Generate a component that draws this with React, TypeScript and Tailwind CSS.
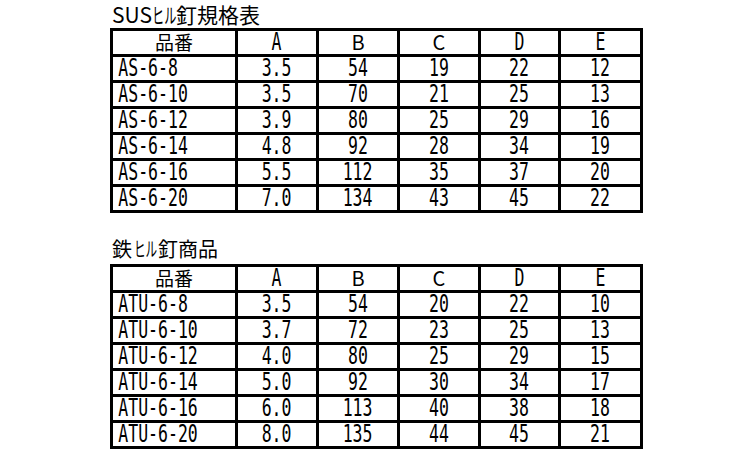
import React from 'react';

type Row = [string, string, string, string, string, string];

const sus: Row[] = [
  ['AS-6-8', '3.5', '54', '19', '22', '12'],
  ['AS-6-10', '3.5', '70', '21', '25', '13'],
  ['AS-6-12', '3.9', '80', '25', '29', '16'],
  ['AS-6-14', '4.8', '92', '28', '34', '19'],
  ['AS-6-16', '5.5', '112', '35', '37', '20'],
  ['AS-6-20', '7.0', '134', '43', '45', '22'],
];

const iron: Row[] = [
  ['ATU-6-8', '3.5', '54', '20', '22', '10'],
  ['ATU-6-10', '3.7', '72', '23', '25', '13'],
  ['ATU-6-12', '4.0', '80', '25', '29', '15'],
  ['ATU-6-14', '5.0', '92', '30', '34', '17'],
  ['ATU-6-16', '6.0', '113', '40', '38', '18'],
  ['ATU-6-20', '8.0', '135', '44', '45', '21'],
];

const narrow = "inline-block whitespace-nowrap scale-x-[0.66] font-['DejaVu_Sans_Mono',monospace] text-[25px] leading-[18px]";
const cell = 'h-[26px] p-0 border-[3px] border-black text-center align-middle whitespace-nowrap leading-[18px]';

const SpecTable = ({ rows }: { rows: Row[] }) => (
  <table className="table-fixed border-collapse w-[530px] bg-white text-black">
    <colgroup>
      <col className="w-[125px]" />
      <col className="w-[81px]" />
      <col className="w-[81px]" />
      <col className="w-[81px]" />
      <col className="w-[80px]" />
      <col className="w-[82px]" />
    </colgroup>
    <thead>
      <tr>
        <th className={`${cell} font-normal`}>
          <span className="inline-block font-['Noto_Sans_CJK_JP',sans-serif] text-[19px] leading-[18px]">品番</span>
        </th>
        <th className={`${cell} font-normal`}><span className={narrow}>A</span></th>
        <th className={`${cell} font-normal`}>
          <span className="inline-block font-['Noto_Sans_CJK_JP',sans-serif] text-[20px] leading-[18px]">B</span>
        </th>
        <th className={`${cell} font-normal`}>
          <span className="inline-block font-['Noto_Sans_CJK_JP',sans-serif] text-[20px] leading-[18px]">C</span>
        </th>
        <th className={`${cell} font-normal`}><span className={narrow}>D</span></th>
        <th className={`${cell} font-normal`}><span className={narrow}>E</span></th>
      </tr>
    </thead>
    <tbody>
      {rows.map((r) => (
        <tr key={r[0]}>
          <td className={`${cell} text-left`}>
            <span className={`${narrow} origin-left pl-[8px]`}>{r[0]}</span>
          </td>
          {r.slice(1).map((v, i) => (
            <td key={i} className={cell}>
              <span className={narrow}>{v}</span>
            </td>
          ))}
        </tr>
      ))}
    </tbody>
  </table>
);

// half-width looking ヒル: full glyph height, squeezed
const HiRu = ({ w }: { w: string }) => (
  <span className={`inline-block whitespace-nowrap ${w}`}>
    <span className="inline-block origin-left scale-x-[0.58]">ヒル</span>
  </span>
);

export default function App() {
  return (
    <div className="w-[750px] h-[450px] bg-white overflow-hidden pl-[110px]">
      <div className="h-[28px] flex items-end pl-[2px] font-['Noto_Sans_CJK_JP',sans-serif] text-[21px] leading-none text-black pb-[3px] whitespace-nowrap">
        SUS<HiRu w="w-[24px]" />釘規格表
      </div>
      <SpecTable rows={sus} />
      <div className="h-[51px] flex items-end pl-[2px] font-['Noto_Sans_CJK_JP',sans-serif] text-[20px] leading-none text-black pb-[5px] whitespace-nowrap">
        鉄<span className="w-[2px]" /><HiRu w="w-[24px]" />釘商品
      </div>
      <SpecTable rows={iron} />
    </div>
  );
}
